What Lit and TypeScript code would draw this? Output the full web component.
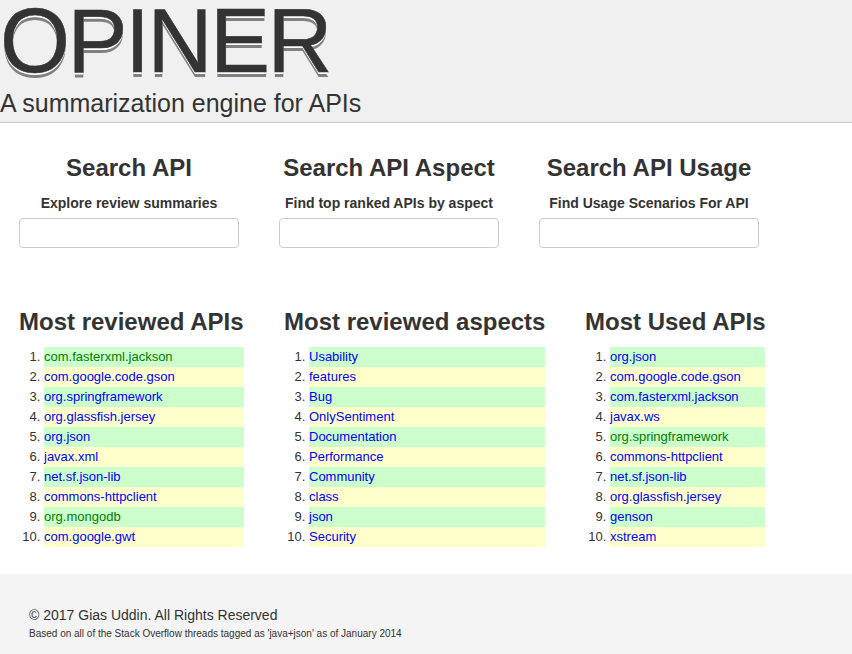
import { LitElement, html, css } from "lit";
import { customElement } from "lit/decorators.js";

type Item = [string, boolean?];
const cols: { title: string; cls: string; items: Item[] }[] = [
  {
    title: "Most reviewed APIs",
    cls: "c1",
    items: [["com.fasterxml.jackson", true], ["com.google.code.gson"], ["org.springframework"], ["org.glassfish.jersey"], ["org.json"], ["javax.xml"], ["net.sf.json-lib"], ["commons-httpclient"], ["org.mongodb", true], ["com.google.gwt"]],
  },
  {
    title: "Most reviewed aspects",
    cls: "c2",
    items: [["Usability"], ["features"], ["Bug"], ["OnlySentiment"], ["Documentation"], ["Performance"], ["Community"], ["class"], ["json"], ["Security"]],
  },
  {
    title: "Most Used APIs",
    cls: "c3",
    items: [["org.json"], ["com.google.code.gson"], ["com.fasterxml.jackson"], ["javax.ws"], ["org.springframework", true], ["commons-httpclient"], ["net.sf.json-lib"], ["org.glassfish.jersey"], ["genson"], ["xstream"]],
  },
];
const searches = [
  ["Search API", "Explore review summaries"],
  ["Search API Aspect", "Find top ranked APIs by aspect"],
  ["Search API Usage", "Find Usage Scenarios For API"],
];

@customElement("app-root")
export class AppRoot extends LitElement {
  static styles = css`
    :host { display: block; font-family: "Liberation Sans", Arial, sans-serif; color: #333; background: #fff; height: 654px; overflow: hidden; position: relative; }
    * { box-sizing: border-box; }
    .head { height: 123px; background: #f0f0f0; border-bottom: 1px solid #ccc; }
    h1 { margin: 0; height: 86px; font-size: 90px; line-height: 82px; letter-spacing: -2.5px; font-weight: 400; color: #333; -webkit-text-stroke: 0.5px #333; text-shadow: 0 2px 0 #fff, 0 5px 0 #808080; white-space: nowrap; }
    .tag { font-size: 25px; line-height: 30px; padding-top: 2px; }
    .searches { display: flex; gap: 40px; padding: 32px 0 0 19px; }
    .s { width: 220px; text-align: center; }
    .s h2 { margin: 0; font-size: 24px; line-height: 26px; font-weight: 700; }
    .s p { margin: 12px 0 0; font-size: 14px; line-height: 20px; font-weight: 700; }
    .s input { display: block; width: 220px; height: 30px; margin-top: 5px; border: 1px solid #ccc; border-radius: 4px; background: #fff; }
    .lists { display: flex; gap: 40px; padding: 61px 0 0 19px; }
    h3 { margin: 0; font-size: 24px; line-height: 26px; font-weight: 700; white-space: nowrap; }
    ol { margin: 12px 0 0; padding: 0 0 0 25px; font-size: 13px; line-height: 20px; }
    li { height: 20px; }
    li:nth-child(odd) { background: #ccffcc; }
    li:nth-child(even) { background: #ffffcc; }
    li a { color: #0000ff; text-decoration: none; }
    li a.g { color: #008000; }
    .c1 { width: 225px; }
    .c2 { width: 261px; }
    .c3 { width: 180px; }
    .foot { position: absolute; left: 0; right: 0; top: 574px; height: 80px; background: #f4f4f4; padding: 32px 0 0 29px; }
    .foot .a { font-size: 14px; line-height: 18px; }
    .foot .b { font-size: 10px; line-height: 12px; margin-top: 4px; }
  `;

  render() {
    return html`
      <div class="head">
        <h1>OPINER</h1>
        <div class="tag">A summarization engine for APIs</div>
      </div>
      <div class="searches">
        ${searches.map(([t, d]) => html`<div class="s"><h2>${t}</h2><p>${d}</p><input type="text" /></div>`)}
      </div>
      <div class="lists">
        ${cols.map(c => html`<div class=${c.cls}>
          <h3>${c.title}</h3>
          <ol>${c.items.map(([n, g]) => html`<li><a class=${g ? "g" : ""} href="#">${n}</a></li>`)}</ol>
        </div>`)}
      </div>
      <div class="foot">
        <div class="a">© 2017 Gias Uddin. All Rights Reserved</div>
        <div class="b">Based on all of the Stack Overflow threads tagged as 'java+json' as of January 2014</div>
      </div>
    `;
  }
}
